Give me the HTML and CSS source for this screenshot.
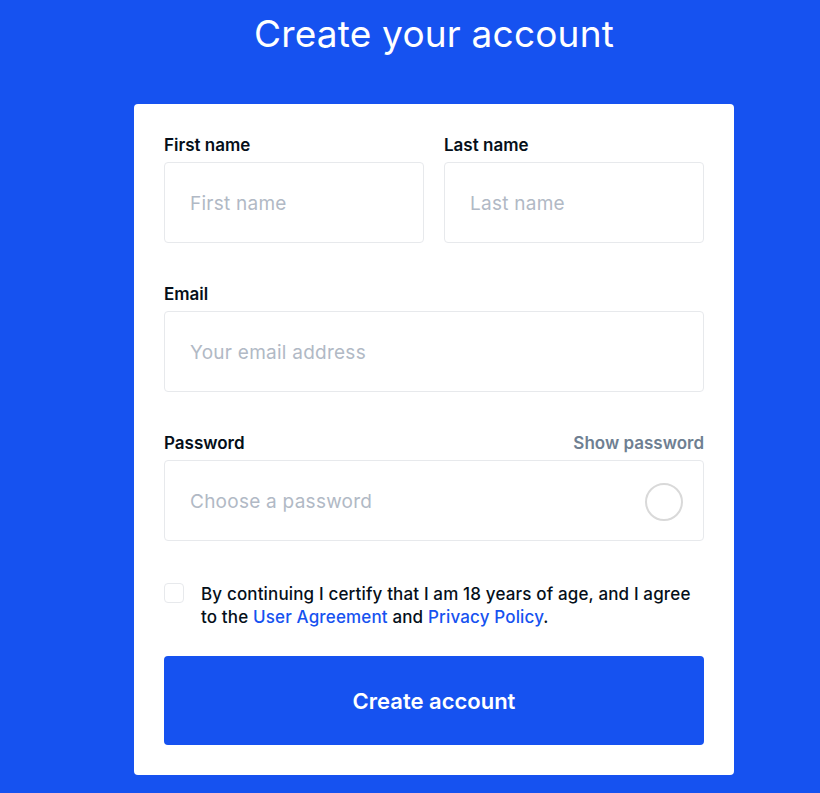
FILE: index.html
```html
<!DOCTYPE html>
<html>
<head>
<meta charset="utf-8">
<link rel="stylesheet" href="styles.css">
</head>
<body>
<div class="page">
  <h1 class="title">Create your account</h1>
  <form class="card">
    <div class="row">
      <div class="field">
        <label class="label">First name</label>
        <div class="input"><span class="ph">First name</span></div>
      </div>
      <div class="field">
        <label class="label">Last name</label>
        <div class="input"><span class="ph">Last name</span></div>
      </div>
    </div>
    <div class="field">
      <label class="label">Email</label>
      <div class="input"><span class="ph">Your email address</span></div>
    </div>
    <div class="field">
      <div class="label-row">
        <label class="label">Password</label>
        <span class="show">Show password</span>
      </div>
      <div class="input input-pw">
        <span class="ph">Choose a password</span>
        <span class="ring"></span>
      </div>
    </div>
    <div class="agree">
      <span class="check"></span>
      <p class="agree-text">By continuing I certify that I am 18 years of age, and I agree to the <a class="link">User Agreement</a> and <a class="link">Privacy Policy</a>.</p>
    </div>
    <button type="button" class="btn">Create account</button>
  </form>
</div>
</body>
</html>
```

FILE: styles.css
```css
* { box-sizing: border-box; }
html, body {
  margin: 0;
  padding: 0;
  background: #1652f0;
  font-family: Inter, "Open Sans", sans-serif;
  height: 793px;
  overflow: hidden;
}
.page {
  display: flex;
  flex-direction: column;
  align-items: center;
  padding-left: 48px;
}
.title {
  margin: 12px 0 0;
  height: 92px;
  font-size: 37px;
  line-height: 44px;
  font-weight: 400;
  color: #fff;
  letter-spacing: 0.2px;
}
.card {
  width: 600px;
  background: #fff;
  border-radius: 4px;
  padding: 31px 30px 30px;
  display: flex;
  flex-direction: column;
}
.row {
  display: flex;
  gap: 20px;
}
.row .field { flex: 1; }
.field {
  display: flex;
  flex-direction: column;
  margin-bottom: 41px;
}
.label {
  font-size: 17px;
  line-height: 20px;
  font-weight: 600;
  color: #050f19;
  margin-bottom: 7px;
}
.label-row {
  display: flex;
  justify-content: space-between;
  align-items: flex-start;
}
.show {
  font-size: 17px;
  line-height: 20px;
  font-weight: 600;
  color: #6f7f92;
}
.input {
  height: 81px;
  border: 1px solid #e7e9ec;
  border-radius: 4px;
  display: flex;
  align-items: center;
  padding: 2px 25px 0;
}
.input-pw { justify-content: space-between; padding-right: 20px; }
.ph {
  font-size: 19px;
  letter-spacing: 0.25px;
  color: #b1b9c5;
  font-weight: 400;
}
.ring {
  width: 38px;
  height: 38px;
  border: 2px solid #d9d9d9;
  border-radius: 50%;
}
.agree {
  display: flex;
  gap: 17px;
  margin-top: 1px;
  margin-bottom: 27px;
}
.check {
  flex: none;
  width: 20px;
  height: 20px;
  border: 1px solid #e7e9ec;
  border-radius: 4px;
}
.agree-text {
  margin: 0;
  font-size: 17px;
  line-height: 23px;
  font-weight: 500;
  letter-spacing: 0.15px;
  color: #050f19;
}
.link { color: #1652f0; }
.btn {
  height: 89px;
  border: 0;
  border-radius: 4px;
  background: #1652f0;
  color: #fff;
  font-family: inherit;
  font-size: 22px;
  font-weight: 600;
}
```
